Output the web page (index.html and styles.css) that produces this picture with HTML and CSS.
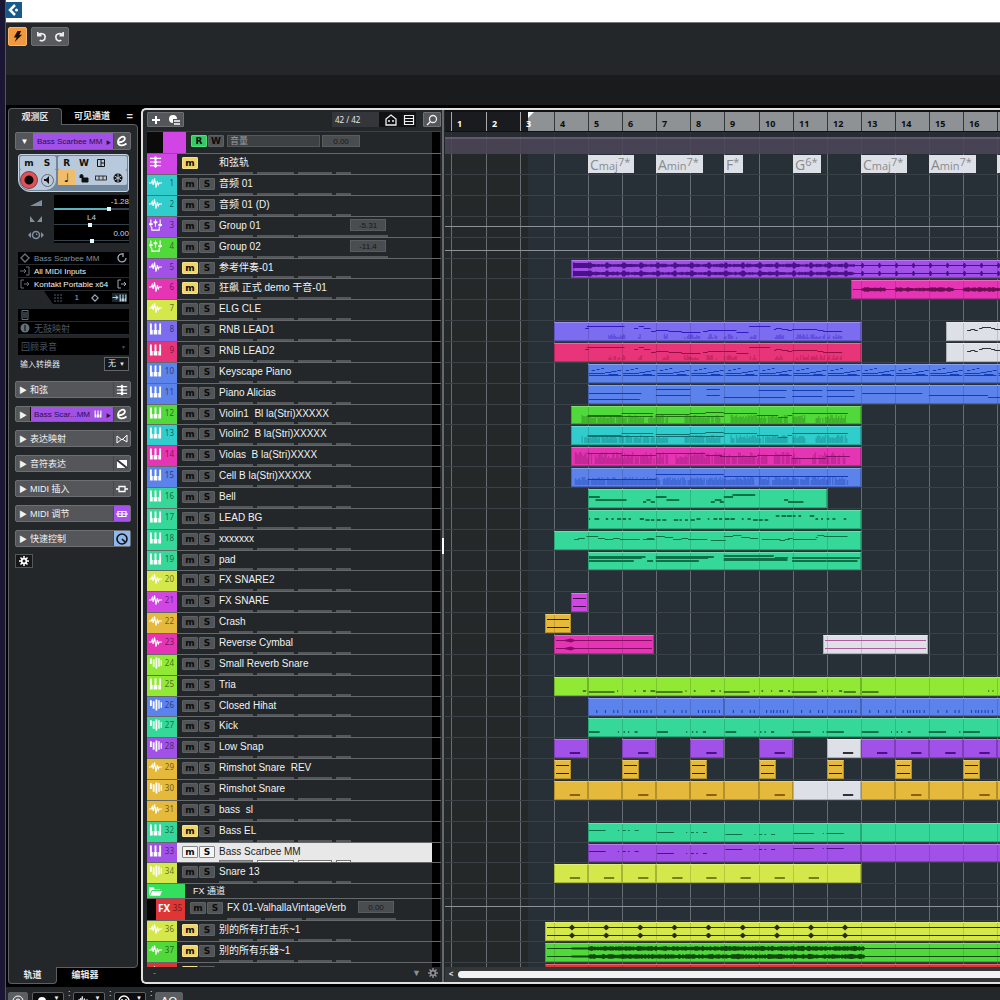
FILE: index.html
```html
<!DOCTYPE html>
<html lang="zh-CN">
<head>
<meta charset="utf-8">
<title>Project</title>
<link rel="stylesheet" href="styles.css">
</head>
<body>
<svg class="sprite" aria-hidden="true">
  <symbol id="i-wave" viewBox="0 0 14 12"><path d="M0 6h2.500l1-2.500 1 4.500L6 1l1.500 10L9 4l1 4 1-2h3" fill="none" stroke="currentColor" stroke-width="1.200"/></symbol>
  <symbol id="i-group" viewBox="0 0 14 12"><path d="M2 0v8M7 0v8M12 0v8M3 8v3.500h8V8" fill="none" stroke="currentColor" stroke-width="1.200"/><path d="M0 4h4v2H0zM5 2h4v2H5zM10 5h4v2h-4z" fill="currentColor"/></symbol>
  <symbol id="i-keys" viewBox="0 0 14 12"><path d="M1 0h2v7h1v5H1zM6 0h2v7h1v5H5V7h1zM11 0h2v12h-3V7h1z" fill="currentColor"/></symbol>
  <symbol id="i-drum" viewBox="0 0 14 12"><path d="M1 1h2v6H1zM4 2h2v8H4zM7 0h2v12H7zM10 1h1.500v9H10zM12.500 3H14v6h-1.500z" fill="currentColor"/></symbol>
  <symbol id="i-chord" viewBox="0 0 14 12"><path d="M1 2h12M1 6h12M1 10h12M7 0v12" fill="none" stroke="currentColor" stroke-width="1.300"/><circle cx="7" cy="2" r="1.800" fill="currentColor"/><circle cx="7" cy="6" r="1.800" fill="currentColor"/><circle cx="7" cy="10" r="1.800" fill="currentColor"/></symbol>
  <symbol id="i-folder" viewBox="0 0 14 12"><path d="M0 11V2h5l1 2h6v1H3z" fill="currentColor"/><path d="M3.500 6H14l-2 5H1z" fill="currentColor"/></symbol>
  <symbol id="i-gear" viewBox="0 0 12 12"><path d="M6 0v12M0 6h12M1.800 1.800l8.400 8.400M10.200 1.800l-8.400 8.400" stroke="currentColor" stroke-width="1.800"/><circle cx="6" cy="6" r="3.800" fill="currentColor"/><circle cx="6" cy="6" r="1.800" fill="#16181a"/></symbol>
  <symbol id="i-edit" viewBox="0 0 12 12"><path d="M2 7C6 8 10 5 8.500 2.500 7 .5 2 3 2 7c0 4 5 4.500 8.500 1.500" fill="none" stroke="currentColor" stroke-width="1.800"/></symbol>
  <symbol id="i-out" viewBox="0 0 10 10"><path d="M4 1H1v8h3M4 5h5M7 3l2 2-2 2" fill="none" stroke="currentColor"/></symbol>
  <symbol id="i-in" viewBox="0 0 10 10"><path d="M6 1h3v8H6M0 5h6M4 3l2 2-2 2" fill="none" stroke="currentColor"/></symbol>
  <symbol id="i-diamond" viewBox="0 0 10 10"><path d="M5 1l4 4-4 4-4-4z" fill="none" stroke="currentColor" stroke-width="1.400"/></symbol>
</svg>

<div class="app">
  <header class="titlebar">
    <svg class="logo" viewBox="0 0 16 16"><rect width="16" height="16" fill="#17598a"/><path d="M9 3L4 8l5 5" fill="none" stroke="#fff" stroke-width="2.500"/><circle cx="10.500" cy="8" r="1.500" fill="#fff"/></svg>
  </header>
  <div class="toolbar">
    <button class="tool tool-on" aria-label="Constrain"><svg viewBox="0 0 12 12"><path d="M6 0h4L8 4h3L3 12l2-5H2z" fill="#1a1310"/></svg></button>
    <div class="toolpair">
      <button class="tool" aria-label="Undo"><svg viewBox="0 0 12 12"><path d="M2 1v4h4M2 5c2-3.500 8-2.500 8 1.500S6 11.500 4 10" fill="none" stroke="#eee" stroke-width="1.800"/></svg></button>
      <button class="tool" aria-label="Redo"><svg viewBox="0 0 12 12"><path d="M10 1v4H6M10 5C8 1.500 2 2.500 2 6.500S6 11.500 8 10" fill="none" stroke="#eee" stroke-width="1.800"/></svg></button>
    </div>
  </div>
  <div class="infoline"></div>

  <main class="main">
    <aside class="inspector">
      <nav class="tabs tabs-top"><a class="tab tab-on" href="#inspector">观测区</a><a class="tab" href="#visibility">可见通道</a><span class="menu">=</span></nav>
      <div class="panel">
        <div class="section section-track">
          <button class="fold" aria-label="Collapse">▼</button>
          <span class="trackname">Bass Scarbee MM<i>▶</i></span>
          <button class="cap" aria-label="Edit"><svg class="icon12"><use href="#i-edit"/></svg></button>
        </div>

        <div class="bank">
          <div class="bank-ms"><button>m</button><button>S</button></div>
          <div class="bank-rw"><button>R</button><button>W</button><button aria-label="Lanes"><svg class="icon8" viewBox="0 0 8 8"><path d="M.5.5h7v7h-7zM4 0v8M4 4h4" fill="none" stroke="#111"/></svg></button><span></span></div>
          <div class="bank-rec"><button class="rec" aria-label="Record"></button><button class="mon" aria-label="Monitor"><svg class="icon8" viewBox="0 0 8 8"><path d="M0 3h2l3-3v8L2 5H0z" fill="#111"/></svg></button></div>
          <div class="bank-time">
            <button class="note" aria-label="Time base">♩</button>
            <button aria-label="Lock"><svg class="icon10" viewBox="0 0 10 10"><path d="M3 5h6v4H3zM1 5V3c0-2 3-2 3 0v2" fill="#111" fill-rule="evenodd" stroke="#111"/></svg></button>
            <button aria-label="Lanes"><svg class="icon12" viewBox="0 0 12 12"><path d="M0 4h11.500v4H.5V4M4 4v4M8 4v4" fill="none" stroke="#333"/></svg></button>
            <button aria-label="Freeze"><svg class="icon10" viewBox="0 0 10 10"><circle cx="5" cy="5" r="4.500" fill="#111"/><path d="M5 1v8M1.500 3l7 4M1.500 7l7-4" stroke="#b9c9dc"/></svg></button>
          </div>
        </div>

        <div class="faders">
          <svg class="icon12" viewBox="0 0 12 12"><path d="M0 9L12 3v6z" fill="#7f8f9f"/></svg>
          <label class="fader"><span class="right">-1.28</span><input type="range" class="filled" value="75" min="0" max="100" aria-label="Volume"></label>
          <svg class="icon12" viewBox="0 0 12 12"><path d="M0 3l5 6H0zM12 3L7 9h5z" fill="#7f8f9f"/></svg>
          <label class="fader"><span>L4</span><input type="range" value="48" min="0" max="100" aria-label="Pan"></label>
          <svg class="icon16" viewBox="0 0 16 12"><circle cx="8" cy="6" r="3.500" fill="none" stroke="#7f8f9f" stroke-width="1.500"/><path d="M3 3v6L0 6zM13 3v6l3-3zM8 4v2h2" fill="#7f8f9f"/></svg>
          <label class="fader"><span class="right">0.00</span><input type="range" value="50" min="0" max="100" aria-label="Delay"></label>
        </div>

        <ul class="routing">
          <li class="dim"><svg class="icon10"><use href="#i-diamond"/></svg><span>Bass Scarbee MM</span><svg class="icon10" viewBox="0 0 10 10"><path d="M6 1a4 4 0 1 0 3 4M6 0v4" fill="none" stroke="currentColor" stroke-width="1.300"/></svg></li>
          <li><svg class="icon10"><use href="#i-in"/></svg><span>All MIDI Inputs</span></li>
          <li><svg class="icon10"><use href="#i-out"/></svg><span>Kontakt Portable x64</span><svg class="icon10"><use href="#i-out"/></svg></li>
        </ul>
        <div class="channel">
          <svg class="icon8" viewBox="0 0 8 8"><path d="M0 1h8M0 4h8M0 7h8" stroke="#51606a" stroke-dasharray="2 1"/></svg>
          <span>1</span>
          <svg class="icon8"><use href="#i-diamond"/></svg>
          <b>➔<svg class="icon8"><use href="#i-keys"/></svg></b>
        </div>
        <ul class="routing maps">
          <li class="dim"><svg class="icon10" viewBox="0 0 10 10"><path d="M2 .5h6v9H2zM3 3h4M3 5h4M3 7h4" fill="none" stroke="currentColor"/></svg></li>
          <li class="dim"><svg class="icon10" viewBox="0 0 10 10"><circle cx="5" cy="5" r="4.500" fill="currentColor"/><path d="M5 2v6" stroke="#000"/></svg><span>无鼓映射</span></li>
        </ul>
        <div class="retro"><span>回顾录音</span><i>▼</i></div>
        <div class="transformer"><label for="transformer">输入转换器</label><span class="pick"><select id="transformer"><option>无</option></select><i>▼</i></span></div>

        <div class="sections">
          <button class="section"><i>▶</i><span>和弦</span><b class="cap"><svg class="icon12"><use href="#i-chord"/></svg></b></button>
          <button class="section section-instrument"><i>▶</i><span class="trackname">Bass Scar...MM<svg class="icon8"><use href="#i-keys"/></svg><i>▶</i></span><b class="cap"><svg class="icon12"><use href="#i-edit"/></svg></b></button>
          <button class="section"><i>▶</i><span>表达映射</span><b class="cap"><svg class="icon12" viewBox="0 0 12 12"><path d="M1 3l5 4 5-5v7L6 6l-5 4z" fill="none" stroke="currentColor"/></svg></b></button>
          <button class="section"><i>▶</i><span>音符表达</span><b class="cap"><svg class="icon12" viewBox="0 0 12 12"><path d="M1 2h10v8H1z" fill="currentColor"/><path d="M1 2l10 8" stroke="#33363a" stroke-width="2"/></svg></b></button>
          <button class="section"><i>▶</i><span>MIDI 插入</span><b class="cap"><svg class="icon12" viewBox="0 0 12 12"><path d="M0 6h3M9 6h3M3 3.500h6v5H3z" fill="none" stroke="currentColor" stroke-width="1.300"/></svg></b></button>
          <button class="section"><i>▶</i><span>MIDI 调节</span><b class="cap cap-purple"><svg class="icon12" viewBox="0 0 12 12"><path d="M0 6h12M2 3.500h8v5H2zM6 3v6" fill="none" stroke="currentColor" stroke-width="1.200"/></svg></b></button>
          <button class="section"><i>▶</i><span>快速控制</span><b class="cap cap-blue"><svg class="icon12" viewBox="0 0 12 12"><circle cx="6" cy="6" r="5" fill="none" stroke="currentColor" stroke-width="1.600"/><path d="M6 6l3 3" stroke="currentColor" stroke-width="1.600"/></svg></b></button>
        </div>
        <button class="setup" aria-label="Setup"><svg class="icon10"><use href="#i-gear"/></svg></button>
      </div>
      <nav class="tabs tabs-bottom"><a class="tab tab-on" href="#track">轨道</a><a class="tab" href="#editor">编辑器</a></nav>
    </aside>

    <section class="project">
      <div class="tracklist">
        <div class="listhead">
          <div class="group"><button aria-label="Add track"><svg class="icon10" viewBox="0 0 10 10"><path d="M5 1v8M1 5h8" stroke="#fff" stroke-width="2"/></svg></button><button aria-label="Track preset"><svg class="icon12" viewBox="0 0 12 12"><circle cx="5" cy="5" r="4" fill="#fff"/><path d="M5 5h7v6H5z" fill="#555"/><path d="M6 7h6M6 10h6" stroke="#fff" stroke-width="1.500"/></svg></button></div>
          <div class="filters"><span>42 / 42</span><button aria-label="Agents"><svg class="icon12" viewBox="0 0 12 12"><path d="M1 5l5-4 5 4v6H1z" fill="none" stroke="#eee" stroke-width="1.300"/><circle cx="4" cy="7" r="1" fill="#eee"/><circle cx="8" cy="7" r="1" fill="#eee"/></svg></button><button aria-label="List"><svg class="icon12" viewBox="0 0 12 12"><path d="M1.500 1.500h9v9h-9zM2 4.500h8M2 7.500h8" fill="none" stroke="#eee" stroke-width="1.200"/></svg></button></div>
          <button class="find" aria-label="Find"><svg class="icon12" viewBox="0 0 12 12"><circle cx="7" cy="5" r="3.500" fill="none" stroke="#eee" stroke-width="1.300"/><path d="M4.500 7.500L1 11" stroke="#eee" stroke-width="1.300"/></svg></button>
        </div>
        <div class="rows" id="rows"></div>
        <div class="listfoot"><span>-</span><i>▼</i><svg class="icon10"><use href="#i-gear"/></svg></div>
      </div>
      <div class="divider"></div>
      <div class="timeline">
        <div class="ruler" id="ruler"></div>
        <div class="lanes" id="lanes"></div>
        <div class="scroll"><button aria-label="Scroll left">&lt;</button><div class="thumb"></div></div>
      </div>
    </section>
  </main>

  <footer class="lowerbar">
    <button class="lit" aria-label="Activate"><svg class="icon12" viewBox="0 0 12 12"><circle cx="6" cy="6" r="2" fill="none" stroke="#fff"/><circle cx="6" cy="6" r="5" fill="none" stroke="#fff"/></svg></button>
    <button aria-label="Record mode"><svg class="icon10" viewBox="0 0 10 10"><circle cx="5" cy="6" r="4" fill="#fff"/></svg><i>▼</i></button><span>:</span>
    <button aria-label="Audio mode"><svg class="icon10"><use href="#i-wave"/></svg><i>▼</i></button><span>:</span>
    <button aria-label="MIDI mode"><svg class="icon12" viewBox="0 0 12 12"><circle cx="6" cy="6" r="5" fill="none" stroke="#fff" stroke-width="1.500"/><circle cx="4" cy="5" r="1" fill="#fff"/><circle cx="8" cy="5" r="1" fill="#fff"/></svg><i>▼</i></button><span>:</span>
    <button class="lit">AQ</button>
  </footer>
</div>
<script src="project.js"></script>
</body>
</html>
```
FILE: styles.css
```css
* { box-sizing: border-box; }
body { margin: 0; background: #1a1633; color: #e6e6e6; font-family: "Liberation Sans", "Noto Sans CJK SC", sans-serif; font-size: 10px; }
button, input, select { font: inherit; color: inherit; margin: 0; padding: 0; border: 0; background: none; }
a { color: inherit; text-decoration: none; }
i, b { font-style: normal; font-weight: normal; }
ul { list-style: none; margin: 0; padding: 0; }
svg { display: block; flex: none; }
.sprite { width: 0; height: 0; position: absolute; }
.icon8 { width: 8px; height: 8px; }
.icon10 { width: 10px; height: 10px; }
.icon12 { width: 12px; height: 12px; }
.icon16 { width: 16px; height: 12px; }

.app { height: 100vh; margin-left: 5px; display: flex; flex-direction: column; overflow: hidden; background: #000; border-left: 1px solid #55565c; }
.titlebar { height: 22px; background: #fff; flex: none; }
.logo { width: 16px; height: 16px; margin-top: 2px; }
.toolbar { height: 53px; flex: none; background: #23272a; border-top: 1px solid #777; display: flex; gap: 4px; padding: 4px 2px; }
.tool { width: 19px; height: 19px; display: grid; place-items: center; }
.tool svg { width: 11px; height: 11px; }
.tool-on { background: #f0993f; border: 1px solid #f8b56c; border-radius: 2px; }
.toolpair { display: flex; height: 19px; width: 38px; background: #585a5d; border: 1px solid #6c6e70; border-radius: 2px; align-items: center; }
.infoline { height: 30px; flex: none; background: #191b1d; }
.main { flex: 1; min-height: 0; display: flex; gap: 3px; padding: 3px 0 3px 2px; }

/* Inspector */
.inspector { width: 130px; flex: none; display: flex; flex-direction: column; font-size: 8px; }
.tabs { display: flex; height: 17px; flex: none; font-size: 9px; font-weight: bold; line-height: 16px; z-index: 1; }
.tab { width: 60px; text-align: center; }
.tab-on { width: 54px; background: #23272a; border: 1px solid #5c6063; }
.tabs-top .tab-on { border-bottom: 0; border-radius: 4px 4px 0 0; }
.tabs-bottom .tab-on { width: 49px; border-top: 0; border-radius: 0 0 4px 4px; }
.tabs-bottom .tab { width: 56px; }
.tabs-bottom .tab-on { width: 49px; }
.menu { margin-left: auto; padding-right: 5px; font-size: 11px; }
.panel { flex: 1; min-height: 0; margin: -1px 0; padding: 7px 6px; background: #23272a; border: 1px solid #5c6063; border-radius: 0 4px 4px 0; display: flex; flex-direction: column; }
.section { display: flex; align-items: center; width: 116px; height: 17px; flex: none; background: #54565a; border: 1px solid #6d6f73; border-radius: 2px; font-size: 9px; text-align: left; color: #f2f2f2; }
.section > i { width: 14px; font-size: 8px; text-align: center; }
.section > span { flex: 1; }
.section .cap, .cap { width: 17px; height: 15px; display: grid; place-items: center; border-left: 1px solid #45474a; color: #fff; }
.section .cap-purple { background: #a651ee; }
.section .cap-blue { background: #8db9ee; color: #111; }
.fold { width: 17px; font-size: 8px; color: #fff; }
.trackname { display: flex; align-items: center; justify-content: space-between; height: 16px; background: #a151e8; color: #2b0f48; font-size: 8px; padding: 0 2px 0 4px; white-space: nowrap; }
.trackname i { font-size: 5px; }
.trackname svg { color: #fff; }
.section-instrument .trackname { border-left: 1px solid #111; }
.section-track { height: 18px; }

.bank { display: grid; grid-template-columns: 36px 1fr; grid-template-rows: 14px 20px; gap: 0 2px; width: 111px; margin: 4px 0 3px 3px; padding: 1px; background: #70869c; border: 1px solid #c5d3e2; border-radius: 3px 3px 3px 12px; flex: none; }
.bank > div { display: flex; background: #b9c9dc; border-radius: 2px; align-items: center; }
.bank button { flex: 1; display: grid; place-items: center; color: #111; font: bold 9px/12px "DejaVu Sans", sans-serif; height: 100%; }
.bank .bank-rw span { flex: 1; }
.bank .bank-rec { border-radius: 0 0 10px 10px; }
.bank .bank-time { height: 15px; }
.bank .note { background: #efbd6c; font-size: 12px; }
.bank .rec { flex: none; width: 18px; height: 18px; border-radius: 50%; background: radial-gradient(circle, #0a0a0a 4px, #e05257 5px); border: 1px solid #7d3a45; }
.bank .mon { flex: none; width: 13px; height: 13px; margin-left: 3px; border: 1px solid #667; border-radius: 50%; }

.faders { display: grid; grid-template-columns: 36px 75px; justify-items: center; align-items: center; margin-left: 3px; flex: none; background: linear-gradient(90deg, transparent 36px, #000 36px); width: 111px; }
.fader { display: flex; flex-direction: column; width: 75px; height: 16px; }
.fader span { height: 12px; line-height: 14px; text-align: center; color: #c9d4de; }
.fader .right { text-align: right; }
.fader input { appearance: none; width: 75px; height: 4px; background: linear-gradient(#000 1px, #31424d 1px, #31424d 2px, #000 2px); }
.fader .filled { background: linear-gradient(90deg, #5db3bd 54px, #31424d 54px); background-size: 100% 2px; background-repeat: no-repeat; background-position: 0 1px; }
.fader input::-webkit-slider-thumb { appearance: none; width: 4px; height: 4px; background: #e6fbff; }

.routing { margin: 9px 0 0 3px; width: 111px; background: #000; flex: none; }
.routing li { height: 13px; display: flex; align-items: center; padding: 0 2px; gap: 4px; border-bottom: 1px solid #252b30; }
.routing span { flex: 1; color: #f2f2f2; white-space: nowrap; font-size: 8px; }
.routing svg { color: #63717c; }
.routing .dim span { color: #7d91a3; }
.routing li > svg:last-child:not(:first-child) { color: #9aabb8; }
.routing.maps { margin-top: 5px; }
.routing.maps .dim span { color: #4b5763; font-size: 9px; }
.channel { display: flex; justify-content: space-between; align-items: center; height: 13px; width: 85px; margin-left: 29px; padding: 0 2px 0 10px; background: #000; clip-path: polygon(0 0, 100% 0, 100% 100%, 9px 100%); flex: none; color: #9ab; }
.channel b { display: flex; align-items: center; background: #17282e; color: #bcd; }
.retro { display: flex; justify-content: space-between; align-items: center; width: 111px; height: 17px; margin: 3px 0 0 3px; padding: 0 3px; background: #000; color: #4b5763; flex: none; font-size: 9px; }
.retro i { font-size: 5px; }
.transformer { display: flex; justify-content: space-between; align-items: center; margin: 1px 0 10px 5px; height: 15px; width: 109px; flex: none; }
.pick { display: flex; align-items: center; justify-content: space-between; width: 25px; height: 14px; padding: 0 3px; background: #16181a; border: 1px solid #63666a; }
.pick select { appearance: none; width: 10px; font-size: 8px; }
.pick i { font-size: 6px; }
.sections { display: flex; flex-direction: column; gap: 8px; flex: none; }
.sections .section-instrument { height: 16px; }
.section-instrument .trackname { height: 14px; padding-left: 3px; }
.setup { width: 18px; height: 14px; margin-top: 7px; display: grid; place-items: center; background: #16181a; border: 1px solid #55585b; flex: none; color: #fff; }

/* Project window */
.project { flex: 1; min-width: 0; display: flex; padding-left: 4px; background: #23272a; border: 2px solid #e0e0e0; border-right: 0; border-radius: 5px 0 0 5px; overflow: hidden; }
.tracklist { width: 294px; flex: none; display: flex; flex-direction: column; }
.listhead { height: 22px; flex: none; display: flex; align-items: center; padding-bottom: 2px; border-bottom: 1px solid #3d4144; gap: 7px; }
.group, .find { background: #54565a; border: 1px solid #6d6f73; height: 15px; display: flex; align-items: center; border-radius: 1px; }
.group { width: 37px; justify-content: space-around; margin-right: auto; }
.find { width: 18px; justify-content: center; }
.filters { display: flex; align-items: center; width: 84px; height: 15px; background: #101214; gap: 6px; }
.filters span { width: 47px; padding-left: 3px; background: #33363a; font: 8px/15px "Noto Sans", sans-serif; }
.rows { flex: 1; min-height: 0; overflow: hidden; background: linear-gradient(90deg, transparent 285px, #000 285px, #000 293px, transparent 293px); }
.row { height: 21px; display: flex; border-bottom: 1px solid #65696c; }
.short { height: 20px; }
.tall { height: 22px; }
.folder { height: 15px; }
.swatch { width: 30px; margin-right: 5px; display: flex; align-items: center; justify-content: space-between; padding: 0 3px 4px 2px; color: #fff; flex: none; }
.swatch svg { width: 13px; height: 12px; }
.swatch span { font: 8px/12px "Noto Sans", sans-serif; color: rgb(0 0 0 / 55%); }
.nested .swatch { width: 38px; border-left: 9px solid #050505; }
.nested .swatch b { font: bold 10px/12px "Noto Sans", sans-serif; }
.automation .swatch { width: 39px; border-left: 16px solid #0a0a0a; }
.folder .swatch { width: 38px; padding-bottom: 1px; margin-right: 8px; }
.body { width: 250px; display: grid; grid-template-columns: 37px 131px 38px; grid-template-rows: 1fr 2px; align-items: start; white-space: nowrap; }
.ms { display: flex; gap: 1px; padding-top: 3px; }
.ms button { width: 16px; height: 12px; background: #515457; border: 1px solid #5e6164; color: #0c0c0c; font: bold 9px/9px "DejaVu Sans", sans-serif; border-radius: 1px; }
.ms .muted { background: #f0d468; border-color: #f5e08b; }
.ms .read { background: #35c963; border-color: #4ee07c; }
.name { line-height: 17px; color: #f2f2f2; white-space: pre; }
.folder .name { font-size: 9px; line-height: 14px; }
.value { width: 36px; height: 12px; margin-top: 2px; background: #4a4d50; border: 1px solid #5a5d60; color: #15181a; font-size: 8px; text-align: center; }
.strip { grid-row: 2; grid-column: 2 / 4; display: flex; gap: 4px; height: 2px; }
.strip i { height: 2px; width: 34px; background: #55585b; }
.strip i:nth-child(2) { width: 37px; }
.strip i:last-child { width: 15px; }
.strip.bus i:last-child { width: 90px; }
.param { width: 93px; height: 12px; margin-top: 3px; background: #3e4144; border: 1px solid #55585b; color: #9b9ea0; font-size: 9px; line-height: 10px; padding-left: 2px; }
.automation .body { grid-template-columns: 36px 95px 38px; }
.automation .value { margin-top: 3px; width: 38px; }
.selected { background: linear-gradient(90deg, #e8e8e8 285px, transparent 285px); }
.selected .name { color: #1a1a1a; }
.selected .ms button { background: #f5f5f5; border-color: #85888b; }
.selected .strip i { background: #fff; border: 1px solid #777; border-bottom: 0; }
.selected .strip i:first-child { background: #d97a7a; }
.listfoot { height: 15px; flex: none; display: flex; align-items: center; gap: 7px; padding: 0 3px 3px 6px; color: #8a8e91; font-size: 9px; }
.listfoot span { flex: 1; }
.divider { width: 2px; flex: none; margin: 0 1px; background: #66696c; background-image: linear-gradient(transparent 428px, #fff 428px, #fff 444px, transparent 444px); }

/* Timeline */
.timeline { flex: 1; min-width: 0; display: flex; flex-direction: column; }
.ruler { height: 22px; flex: none; position: relative; overflow: hidden; border: solid #111; border-width: 2px 0 1px; background: linear-gradient(90deg, #191b1e 83px, #8f9295 83px); }
.ruler span { position: absolute; top: 0; height: 19px; border-left: 1px solid #33363a; padding-left: 5px; color: #0c0c0c; font: bold 9px/23px "Noto Sans", sans-serif; }
.ruler .early { color: #fff; border-color: #aaa; }
.ruler .locator { position: absolute; left: 83px; top: 0; width: 6px; height: 6px; background: #fff; clip-path: polygon(0 0, 100% 0, 0 100%); }
.lanes { flex: 1; min-height: 0; position: relative; overflow: hidden; background: linear-gradient(90deg, #242829 83px, #272f37 83px); }
.barline { position: absolute; top: 0; bottom: 0; width: 1px; background: #666d72; }
.lane { position: relative; height: 21px; border-bottom: 1px solid #3a4147; }
.lane.short { height: 20px; }
.lane.tall { height: 22px; }
.lane.folder { height: 15px; }
.lane.automation { border: 0; background: linear-gradient(#272c33 5px, #665f70 5px, #665f70 7px, #4b4557 7px); opacity: .9; }
.level { position: absolute; left: 0; right: 0; height: 1px; background: #8c9296; }
.clip { position: absolute; top: 1px; bottom: 0; border: 1px solid rgb(0 0 0 / 22%); border-top-color: rgb(255 255 255 / 25%); overflow: hidden; }
.clip svg { position: absolute; left: -1px; top: -1px; width: 100%; height: 19px; overflow: visible; }
.ink { fill: var(--ink); }
.soft { fill: var(--ink); opacity: .35; }
.beat { fill: #000; opacity: .14; }
.chord { position: absolute; top: 1px; bottom: 1px; padding-left: 2px; background: #dde1e7; color: #888b8e; font: 14px/20px "Open Sans", sans-serif; overflow: hidden; white-space: nowrap; }
.chord small { font-size: 11px; }
.chord sup { font-size: 11px; line-height: 0; vertical-align: 4px; }
.scroll { height: 15px; flex: none; display: flex; align-items: center; padding: 0 0 1px 3px; background: #33373a; gap: 4px; }
.scroll button { width: 6px; font: bold 8px/8px "Noto Sans", sans-serif; }
.thumb { flex: 1; height: 7px; border-radius: 4px 0 0 4px; background: #f2f2f2; }

.lowerbar { height: 13px; flex: none; display: flex; gap: 4px; padding: 5px 2px 0; background: #23272a; overflow: hidden; font-size: 9px; }
.lowerbar button { width: 32px; height: 18px; padding-top: 2px; display: flex; justify-content: space-around; background: #0c0d0e; border: 1px solid #5c6063; border-radius: 2px; color: #fff; }
.lowerbar .lit { background: #5c5f62; width: 20px; }
.lowerbar .lit:last-child { width: 28px; font-size: 11px; }
.lowerbar i { font-size: 6px; }
.lowerbar span { width: 1px; line-height: 3px; }
```
FILE: project.js
```js
// Timeline scale: a bar is BAR pixels wide; note positions are in thirds of a pixel from bar 4.
const BAR = 34.13, FIRST = 6.4, TICK = 1 / 3;
const barX = b => Math.round(FIRST + (b - 1) * BAR);
const COLORS = {
  cyan: ['#31cccc', '#0c6f70'], purple: ['#a151e8', '#4b118a'], green: ['#51d93b', '#1d6d12'],
  pink: ['#e535b5', '#850f66'], yellow: ['#d5e84b', '#75801a'], violet: ['#7b6cf0', '#3519c0'],
  rose: ['#e8357a', '#961045'], blue: ['#5c82ec', '#153bb5'], mint: ['#35d898', '#0c7048'],
  orchid: ['#d145e5', '#5f0f70'], orange: ['#e5b93b', '#8a6206'], lime: ['#91e835', '#458010'],
  red: ['#e03535', '#6a0c0c'], leaf: ['#35df5e', '#0c7030'], white: ['#dde1e7', '#303336']
};

let seed = 7;
const rnd = () => (seed = (seed * 16807) % 2147483647) / 2147483647;
const range = (a, b, s = 1) => { const r = []; for (let i = a; i < b; i += s) r.push(i); return r; };

// Note lists: [start, y, length, height]
const shift = (list, by) => list.map(n => [n[0] + by, n[1], n[2], n[3]]);
const lead = [[94,6,12],[99,4,113],[241,6,12],[255,4,16],[270,6,20],[292,9,14],[306,8,38],[344,9,40],[383,10,57],[448,9,14],[462,8,48],[510,8,38],[548,10,36],[586,4,64],[661,7,6],[666,6,18],[683,7,20],[701,8,14],[715,7,76],[791,8,18],[808,9,57]];
const leadSoft = [[163,215],[253,263],[326,343],[391,436],[458,488],[510,550],[588,608],[663,688],[726,813],[821,863]];
const leadTail = [[1240,8,12],[1250,7,14],[1262,8,10],[1276,6,10],[1284,5,28],[1312,6,12],[1322,7,20]].map(n => [...n, 1]);
const arp = [[11,6,10],[26,5,9],[40,4,8],[52,8,18],[70,7,16],[88,6,12],[3,9,48],[62,10,28],[3,11,96]];
const keys = range(0, 13).flatMap(i => shift(arp, 102.4 * (i + 1)));
const piano = [[105,8,158],[105,14,153],[306,4,104],[306,10,104],[458,4,40],[458,10,40],[510,12,185],[614,5,84],[715,5,91],[715,11,91],[819,5,83],[819,11,83],[925,8,181],[1125,10,178],[1303,12,60]];
const violin = [[101,9,102],[203,7,95],[101,10,197],[306,8,102],[408,7,47],[455,6,55],[306,10,204],[510,7,100],[610,9,63],[673,11,28],[701,9,14],[715,7,167]];
const viola = [[101,6,102],[203,8,103],[306,6,149],[455,8,50],[498,9,112],[610,8,105],[715,11,101],[816,9,72]];
const cello = [[101,11,205],[306,6,204],[510,8,373]];
const bell = [[105,7,33,2],[125,10,93,2],[268,12,9,2],[278,10,12,2],[291,12,12,2],[306,7,32,2],[338,10,38,2],[471,12,12,2],[483,10,20,2],[498,12,12,2],[510,7,28,2],[536,5,68,2],[691,10,12,2],[703,12,46,2]];
const bg = range(105, 885, 17).filter((_, i) => i % 6 !== 2).map((x, i) => [x, i > 26 && i < 33 ? 5 : 8 + (i >> 3) % 2, 4 + rnd() * 11, 2]);
const melody = [[61,8,14],[73,7,20],[98,5,35],[133,7,20],[153,8,25],[178,7,20],[198,8,60],[268,8,35],[280,7,20],[306,5,27],[333,6,25],[358,8,25],[383,7,20],[403,8,58],[471,9,45],[510,5,28],[538,4,25],[563,6,25],[588,7,25],[625,8,55],[678,9,16],[693,8,14],[703,7,14],[718,8,70],[786,6,6],[791,4,20],[810,5,71]];
const pad = [[105,4,170,2],[105,6,159],[105,8,135,2],[280,8,18,2],[306,4,174,2],[306,6,157],[306,8,129,2],[510,3,150,2],[510,6,191,3],[663,5,40],[715,5,203,2],[715,8,103,2],[818,8,93,2]];
const tria = [[87,13,10],[105,14,77],[190,13,3],[242,13,4],[268,13,8],[290,13,14],[306,14,80],[395,13,3],[420,13,5],[471,13,12],[497,13,4],[510,14,77],[600,13,3],[623,13,5],[652,13,3],[676,13,12],[703,13,6],[714,14,75],[804,13,4],[820,13,3],[833,13,3],[856,13,9],[870,14,36],[924,14,50],[1303,13,3],[1316,13,3]].map(n => [...n, 2]);
const hat = range(0, 6).flatMap(i => shift([[25,12,2],[51,12,3],[76,12,3],[88,12,2],[125,12,3],[138,12,2],[146,12,3],[156,12,3],[166,12,2],[175,12,2],[188,12,3]], 102.4 + i * 204.8)).map(n => [n[0], n[1], n[2], 3]);
const kick = range(0, 6).flatMap(i => shift([[3,13,32],[90,13,2],[107,13,4],[120,13,4],[140,13,9]], 102.4 + i * 204.8)).concat([[714,13,56],[818,13,52],[924,13,50],[1125,13,52],[1228,13,50]]).map(n => [n[0], n[1], n[2], 2]);
const bassRun = ys => range(0, 4).flatMap(i => shift([[3,ys[i],i === 3 ? 60 : 50],[90,ys[i],3],[104,ys[i],9],[120,ys[i],5],[140,ys[i],12]].slice(0, i === 3 ? 2 : 5), 102.4 + i * 204.8)).concat([[818,ys[3],52]]);
const hit = bar => [[(bar - 4) * 102.4 + 48, 13, 31, 2]];
const hits = bars => bars.flatMap(hit);
const bowing = [[83, 340], [392, 500], [530, 700], [715, 755], [785, 880]];

// Tracks: kind, name, colour, options, clips [startBar, endBar, notes, options]
const every = (from, to, step, len, notes, opt) => range(from, to, step).map(b => [b, b + len, notes ? notes(b) : [], opt]);
const tracks = [
  { kind: 'automation', color: 'orchid', name: '音量', value: '0.00' },
  { kind: 'chord', color: 'orchid', name: '和弦轨', mute: 1 },
  { kind: 'wave', name: '音频 01', color: 'cyan' },
  { kind: 'wave', name: '音频 01 (D)', color: 'cyan' },
  { kind: 'group', name: 'Group 01', color: 'purple', value: '-5.31', level: 9 },
  { kind: 'group', name: 'Group 02', color: 'green', value: '-11.4', level: 12 },
  { kind: 'wave', name: '参考伴奏-01', color: 'purple', mute: 1, short: 1, clips: [[4.5, 17.5, [], { audio: 'dense' }]] },
  { kind: 'wave', name: '狂飙 正式 demo 干音-01', color: 'pink', mute: 1, clips: [[12.7, 17.5, [], { audio: 'mono', ink: '#6e0c54' }]] },
  { kind: 'wave', name: 'ELG CLE', color: 'yellow' },
  { kind: 'keys', name: 'RNB LEAD1', color: 'violet', clips: [[4, 13, lead, { soft: leadSoft, low: 1 }], [15.5, 17.5, leadTail, { color: 'white' }]] },
  { kind: 'keys', name: 'RNB LEAD2', color: 'rose', clips: [[4, 13, lead, { soft: leadSoft, low: 1 }], [15.5, 17.5, leadTail, { color: 'white' }]] },
  { kind: 'keys', name: 'Keyscape Piano', color: 'blue', clips: [[5, 17.5, keys]] },
  { kind: 'keys', name: 'Piano Alicias', color: 'blue', clips: [[5, 17.5, piano]] },
  { kind: 'keys', name: 'Violin1  Bl la(Stri)XXXXX', color: 'green', short: 1, clips: [[4.5, 13, violin, { soft: bowing }]] },
  { kind: 'keys', name: 'Violin2  B la(Stri)XXXXX', color: 'cyan', clips: [[4.5, 13, violin, { soft: bowing }]] },
  { kind: 'keys', name: 'Violas  B la(Stri)XXXX', color: 'pink', clips: [[4.5, 13, viola, { soft: [[63, 340], [365, 640], [660, 740], [775, 880]], high: 1 }]] },
  { kind: 'keys', name: 'Cell B la(Stri)XXXXX', color: 'blue', clips: [[4.5, 13, cello, { soft: [[63, 380], [385, 600], [615, 880]] }]] },
  { kind: 'keys', name: 'Bell', color: 'mint', clips: [[5, 12, bell]] },
  { kind: 'keys', name: 'LEAD BG', color: 'mint', clips: [[5, 13, bg]] },
  { kind: 'keys', name: 'xxxxxxx', color: 'mint', clips: [[4, 13, melody]] },
  { kind: 'keys', name: 'pad', color: 'mint', short: 1, clips: [[5, 13, pad]] },
  { kind: 'wave', name: 'FX SNARE2', color: 'yellow' },
  { kind: 'wave', name: 'FX SNARE', color: 'orchid', clips: [[4.5, 5, [], { audio: 'flat', ink: '#3d0848' }]] },
  { kind: 'wave', name: 'Crash', color: 'orange', clips: [[3.73, 4.5, [], { audio: 'flat', ink: '#2a1c00' }]] },
  { kind: 'wave', name: 'Reverse Cymbal', color: 'pink', clips: [[4, 6.95, [], { audio: 'flat', swell: 1 }], [11.88, 14.97, [], { audio: 'flat', color: 'white', ink: '#b05c9a' }]] },
  { kind: 'drum', name: 'Small Reverb Snare', color: 'lime' },
  { kind: 'keys', name: 'Tria', color: 'lime', clips: [[4, 5, tria], [5, 13, tria], [13, 17.5, tria]] },
  { kind: 'drum', name: 'Closed Hihat', color: 'blue', short: 1, clips: [[5, 9, hat], [9, 13, hat], [13, 17.5, hat]] },
  { kind: 'drum', name: 'Kick', color: 'mint', clips: [[5, 17.5, kick]] },
  { kind: 'drum', name: 'Low Snap', color: 'purple', clips: [...every(4, 11, 2, 1, hit), [12, 13, hit(12), { color: 'white' }], ...every(13, 18, 1, 1, hit)] },
  { kind: 'wave', name: 'Rimshot Snare  REV', color: 'orange', clips: every(4, 17, 2, 0.5, null, { audio: 'flat', ink: '#2a1c00' }) },
  { kind: 'drum', name: 'Rimshot Snare', color: 'orange', clips: [...range(4, 11).map(b => [b, b + 1, b % 2 ? [] : hit(b)]), [11, 13, hit(12), { color: 'white' }], ...range(13, 18).map(b => [b, b + 1, b % 2 ? [] : hit(b)])] },
  { kind: 'wave', name: 'bass  sl', color: 'orange' },
  { kind: 'keys', name: 'Bass EL', color: 'mint', mute: 1, clips: [[5, 13, bassRun([7, 9, 11, 10])], [13, 17.5, []]] },
  { kind: 'keys', name: 'Bass Scarbee MM', color: 'purple', short: 1, selected: 1, clips: [[5, 13, bassRun([7, 9, 5, 4])], [13, 17.5, []]] },
  { kind: 'drum', name: 'Snare 13', color: 'yellow', clips: [[4, 5, hit(4)], [5, 6, hit(5)], [6, 7, hit(6)], [7, 13, hits(range(7, 12))]] },
  { kind: 'folder', name: 'FX 通道', color: 'leaf' },
  { kind: 'fx', name: 'FX 01-ValhallaVintageVerb', color: 'red', value: '0.00', level: 7 },
  { kind: 'wave', name: '别的所有打击乐~1', color: 'yellow', mute: 1, clips: [[3.73, 17.5, [], { audio: 'hits', ink: '#252b08' }]] },
  { kind: 'wave', name: '别的所有乐器~1', color: 'green', mute: 1, clips: [[3.73, 17.5, [], { audio: 'body', ink: '#0f4a0c' }]] },
  { kind: 'wave', name: 'Kick-TV', color: 'red', mute: 1, clips: [[3.73, 17.5, [], { audio: 'kicks' }]] }
];

const rect = (c, x, y, w, h) => `<rect class="${c}" x="${x.toFixed(1)}" y="${y}" width="${Math.max(w, 1).toFixed(1)}" height="${h}"/>`;

// Outline of one audio channel drawn around its centre line.
function wave(mid, x0, width, kind) {
  const up = [], down = [];
  for (let x = 2; x < width - 1; x++) {
    const bar = (x + x0 - barX(4)) / BAR + 4, phase = ((bar * 2) % 1) * BAR / 2;
    let a = 0.5;
    if (kind === 'dense') a = bar < 12.8 ? (phase < 3 ? 3 : bar < 5 ? 2.5 : 0.9 + rnd()) : (phase < 2 ? 2.5 : 0.6);
    if (kind === 'mono') a = bar > 13 ? (bar % 2 > 1.7 ? 0.5 : 1 + rnd() * 1.5) : 0.5;
    if (kind === 'hits') { const d = Math.abs(((bar % 1) - 0.53) * BAR); a = bar < 12.8 && d < 2.5 ? 3 - d : 0.5; }
    if (kind === 'kicks') a = bar > 5 && (bar % 1) * BAR < 4 ? 2.5 : 0.5;
    if (kind === 'body') a = bar > 5 && bar < 13.1 ? 1.3 + rnd() * 1.4 : bar > 4.5 && bar < 5 ? 0.9 : 0.5;
    up.push(`${x},${(mid - a).toFixed(1)}`);
    down.unshift(`${x},${(mid + a).toFixed(1)}`);
  }
  return `<polygon class="ink" points="${up.concat(down).join(' ')}"/>`;
}

function clipHtml([from, to, notes, opt = {}], track) {
  const left = barX(from), width = barX(to) - left;
  const [fill, ink] = COLORS[opt.color || track.color];
  const origin = FIRST + 3 * BAR - left;
  let art = range(Math.floor(from) + 1, to).map(b => rect('beat', barX(b) - left, 0, 1, 19)).join('');
  (opt.soft || []).forEach(([a, b]) => range(a, b, 4).forEach(t => {
    const h = opt.low ? 2 + Math.floor(rnd() * 4) : opt.high ? 6 + Math.floor(rnd() * 7) : 5 + Math.floor(rnd() * 4);
    if (rnd() > 0.12) art += rect('soft', origin + t * TICK, 17 - h, 1.3, h);
  }));
  notes.forEach(([t, y, w, h]) => {
    const x = origin + t * TICK;
    if (x >= 0 && x < width - 1) art += rect('ink', x, y, w * TICK, h || 1);
  });
  if (opt.audio === 'mono') art += wave(9.5, left, width, 'mono');
  else if (opt.audio) art += wave(5.5, left, width, opt.audio) + wave(13.5, left, width, opt.audio);
  if (opt.swell) art += '<path class="ink" d="M8 5.500l9-2 5 2-5 2zM8 13.500l9-2 5 2-5 2z"/>';
  return `<div class="clip" style="left:${left}px;width:${width}px;background:${fill};--ink:${opt.ink || ink}"><svg>${art}</svg></div>`;
}

const chords = [[5, 'C', 'maj', '7*', 46], [7, 'A', 'min', '7*', 47], [9, 'F', '', '*', 19], [11, 'G', '', '6*', 28], [13, 'C', 'maj', '7*', 46], [15, 'A', 'min', '7*', 47], [17, 'F', '', '*', 19]];
let number = 0, rows = '', lanes = '';
tracks.forEach(t => {
  const plain = ['wave', 'group', 'keys', 'drum', 'fx'].includes(t.kind);
  if (plain) number++;
  const size = t.kind === 'automation' || t.kind === 'fx' ? 'tall' : t.kind === 'folder' ? 'folder' : t.short ? 'short' : '';
  const icon = t.kind === 'fx' ? '<b>FX</b>' : t.kind === 'automation' ? '' : `<svg><use href="#i-${t.kind}"/></svg>`;
  const buttons = t.kind === 'automation' ? '<button class="read">R</button><button>W</button>'
    : t.kind === 'folder' ? '' : `<button class="${t.mute ? 'muted' : ''}">m</button>${plain ? '<button>S</button>' : ''}`;
  const value = t.value ? `<input class="value" value="${t.value}" aria-label="${t.name} level">` : '';
  const bus = t.kind === 'group' || t.kind === 'fx';
  const strip = t.kind === 'folder' || t.kind === 'automation' ? '' : `<div class="strip${bus ? ' bus' : ''}"><i></i><i></i>${bus ? '' : '<i></i>'}<i></i></div>`;
  rows += `<div class="row ${size} ${t.kind === 'automation' ? 'automation' : ''} ${t.kind === 'fx' ? 'nested' : ''} ${t.selected ? 'selected' : ''}">
    <div class="swatch" style="background-color:${COLORS[t.color][0]}">${icon}${plain ? `<span>${number}</span>` : ''}</div>
    ${t.kind === 'folder' ? `<span class="name">${t.name}</span>` : `<div class="body"><div class="ms">${buttons}</div><span class="${t.kind === 'automation' ? 'param' : 'name'}">${t.name}</span>${value}${strip}</div>`}</div>`;
  let content = (t.clips || []).map(c => clipHtml(c, t)).join('');
  if (t.level) content += `<div class="level" style="top:${t.level}px"></div>`;
  if (t.kind === 'chord') content = chords.map(c => `<div class="chord" style="left:${barX(c[0])}px;width:${c[4]}px">${c[1]}<small>${c[2]}</small><sup>${c[3]}</sup></div>`).join('');
  lanes += `<div class="lane ${size} ${t.kind === 'automation' ? 'automation' : ''}">${content}</div>`;
});
const bars = range(1, 18);
document.getElementById('rows').innerHTML = rows;
document.getElementById('lanes').innerHTML = bars.map(b => `<div class="barline" style="left:${barX(b)}px"></div>`).join('') + lanes;
document.getElementById('ruler').innerHTML = bars.map(b => `<span class="${b < 4 ? 'early' : ''}" style="left:${barX(b)}px">${b}</span>`).join('') + '<div class="locator"></div>';
```
